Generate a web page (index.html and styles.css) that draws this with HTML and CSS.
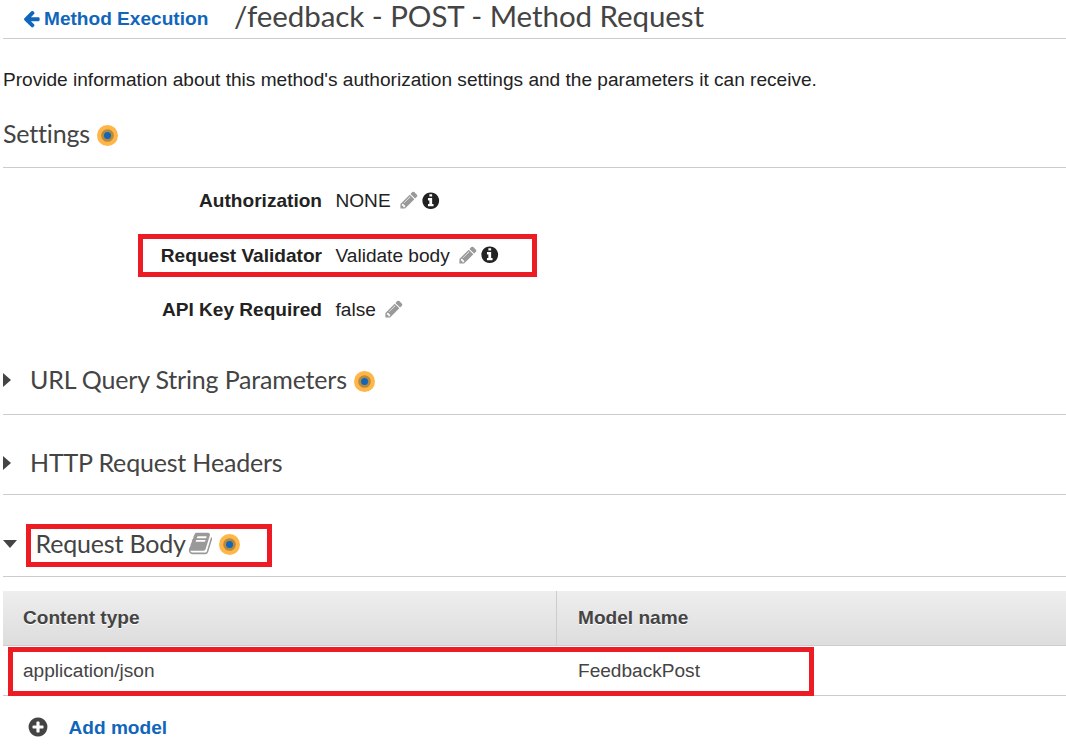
FILE: index.html
```html
<!DOCTYPE html>
<html lang="en">
<head>
<meta charset="utf-8">
<title>Method Request</title>
<link rel="stylesheet" href="styles.css">
</head>
<body>
<svg class="sprite" aria-hidden="true">
  <symbol id="arrow-left" viewBox="0 0 1792 1792"><path d="M1664 896v128q0 53-32.5 90.5t-84.5 37.5h-704l293 294q38 36 38 90t-38 90l-75 76q-37 37-90 37-52 0-91-37l-651-652q-37-37-37-90 0-52 37-91l651-650q38-38 91-38 52 0 90 38l75 74q38 38 38 91t-38 91l-293 293h704q52 0 84.5 37.5t32.5 90.5z"/></symbol>
  <symbol id="pencil" viewBox="0 0 1792 1792"><path d="M491 1536l91-91-235-235-91 91v107h128v128h107zm523-928q0-22-22-22-10 0-17 7l-542 542q-7 7-7 17 0 22 22 22 10 0 17-7l542-542q7-7 7-17zm-54-192l416 416-832 832h-416v-416zm683 96q0 53-37 90l-166 166-416-416 166-165q36-38 90-38 53 0 91 38l235 234q37 39 37 91z"/></symbol>
  <symbol id="info" viewBox="0 0 1792 1792"><path d="M1152 1376v-160q0-14-9-23t-23-9h-96v-512q0-14-9-23t-23-9h-320q-14 0-23 9t-9 23v160q0 14 9 23t23 9h96v320h-96q-14 0-23 9t-9 23v160q0 14 9 23t23 9h448q14 0 23-9t9-23zm-128-896v-160q0-14-9-23t-23-9h-192q-14 0-23 9t-9 23v160q0 14 9 23t23 9h192q14 0 23-9t9-23zm640 416q0 209-103 385.5t-279.5 279.5-385.5 103-385.5-103-279.5-279.5-103-385.5 103-385.5 279.5-279.5 385.5-103 385.5 103 279.5 279.5 103 385.5z"/></symbol>
  <symbol id="plus" viewBox="0 0 1792 1792"><path d="M1344 960v-128q0-26-19-45t-45-19h-256v-256q0-26-19-45t-45-19h-128q-26 0-45 19t-19 45v256h-256q-26 0-45 19t-19 45v128q0 26 19 45t45 19h256v256q0 26 19 45t45 19h128q26 0 45-19t19-45v-256h256q26 0 45-19t19-45zm320-64q0 209-103 385.5t-279.5 279.5-385.5 103-385.5-103-279.5-279.5-103-385.5 103-385.5 279.5-279.5 385.5-103 385.5 103 279.5 279.5 103 385.5z"/></symbol>
  <symbol id="book" viewBox="0 0 1792 1792"><path d="M1703 478q40 57 18 129l-275 906q-19 64-76.5 107.5t-122.5 43.5h-923q-77 0-148.5-53.5t-99.5-131.5q-24-67-2-127 0-4 3-27t4-37q1-8-3-21.5t-3-19.5q2-11 8-21t16.5-23.5 16.5-23.5q23-38 45-91.5t30-91.5q3-10 .5-30t-.5-28q3-11 17-28t17-23q21-36 42-92t25-90q1-9-2.5-32t.5-28q4-13 22-30.5t22-22.5q19-26 42.5-84.5t27.5-96.5q1-8-3-25.5t-2-26.5q2-8 9-18t18-23 17-21q8-12 16.5-30.5t15-35 16-36 19.5-32 26.5-23.5 36-11.5 47.5 5.5l-1 3q38-9 51-9h761q74 0 114 56t18 130l-274 906q-36 119-71.5 153.5t-128.5 34.5h-869q-27 0-38 15-11 16-1 43 24 70 144 70h923q29 0 56-15.5t35-41.5l300-987q7-22 5-57 38 15 59 43zm-1064 2q-4 13 2 22.5t20 9.5h608q13 0 25.5-9.5t16.5-22.5l21-64q4-13-2-22.5t-20-9.5h-608q-13 0-25.5 9.5t-16.5 22.5zm-83 256q-4 13 2 22.5t20 9.5h608q13 0 25.5-9.5t16.5-22.5l21-64q4-13-2-22.5t-20-9.5h-608q-13 0-25.5 9.5t-16.5 22.5z"/></symbol>
  <symbol id="target" viewBox="0 0 21 21"><circle cx="10.5" cy="10.5" r="10.5" fill="#ffb547"/><circle cx="10.5" cy="10.5" r="6.3" fill="#b58a3c"/><circle cx="10.5" cy="10.5" r="3.5" fill="#1166bb"/></symbol>
</svg>
<main class="page">
  <header class="topbar">
    <a class="back"><svg class="icon-back"><use href="#arrow-left"/></svg>Method Execution</a>
    <h1 class="title">/feedback - POST - Method Request</h1>
  </header>
  <p class="intro">Provide information about this method's authorization settings and the parameters it can receive.</p>
  <h2 class="section section-settings">Settings<svg class="target"><use href="#target"/></svg></h2>
  <dl class="settings">
    <div class="setting"><dt>Authorization</dt><dd>NONE<svg class="pencil"><use href="#pencil"/></svg><svg class="info"><use href="#info"/></svg></dd></div>
    <div class="setting"><dt>Request Validator</dt><dd>Validate body<svg class="pencil"><use href="#pencil"/></svg><svg class="info"><use href="#info"/></svg></dd><span class="mark mark-validator"></span></div>
    <div class="setting"><dt>API Key Required</dt><dd>false<svg class="pencil"><use href="#pencil"/></svg></dd></div>
  </dl>
  <h2 class="section section-query"><svg class="caret" viewBox="0 0 8 14"><path d="M0 0L8 7L0 14z"/></svg>URL Query String Parameters<svg class="target"><use href="#target"/></svg></h2>
  <h2 class="section section-headers"><svg class="caret" viewBox="0 0 8 14"><path d="M0 0L8 7L0 14z"/></svg>HTTP Request Headers</h2>
  <h2 class="section section-body"><svg class="caret-down" viewBox="0 0 14 8"><path d="M0 0H14L7 8z"/></svg>Request Body<svg class="book"><use href="#book"/></svg><svg class="target"><use href="#target"/></svg><span class="mark mark-body"></span></h2>
  <div class="table">
    <div class="row head"><div class="cell">Content type</div><div class="cell">Model name</div></div>
    <div class="row"><div class="cell">application/json</div><div class="cell">FeedbackPost</div><span class="mark mark-row"></span></div>
  </div>
  <a class="add"><svg class="plus"><use href="#plus"/></svg>Add model</a>
</main>
</body>
</html>
```
FILE: styles.css
```css
* { box-sizing: border-box; }
body {
  margin: 0;
  height: 745px;
  overflow: hidden;
  background: #fff;
  color: #222;
  font: 19.08px/24px "Liberation Sans", Arial, sans-serif;
}
svg { fill: currentColor; flex: none; }
.sprite { position: absolute; width: 0; height: 0; }
.page { padding-left: 3px; }
.topbar {
  display: flex;
  height: 39px;
  padding-left: 19px;
  border-bottom: 1px solid #ccc;
}
.back {
  display: flex;
  width: 212px;
  padding-top: 6px;
  color: #1166bb;
  font-weight: bold;
  line-height: 25px;
}
.icon-back { width: 19px; height: 19px; margin: 3px 3px 0 0; }
.title {
  margin: 0;
  color: #444;
  font: 29.5px/32px Lato, sans-serif;
  letter-spacing: -0.06px;
  white-space: nowrap;
}
.intro { margin: 0; padding-top: 29px; height: 77px; white-space: nowrap; }
.section {
  position: relative;
  display: flex;
  align-items: center;
  margin: 0;
  border-bottom: 1px solid #ccc;
  color: #444;
  font: 25px/32px Lato, sans-serif;
  letter-spacing: -0.18px;
  white-space: nowrap;
}
.section-settings { height: 52px; padding-bottom: 17px; }
.target { width: 21px; height: 21px; margin: 4px 0 0 7px; }
.settings { margin: 0; padding-top: 6px; height: 191px; }
.setting { position: relative; display: flex; align-items: center; height: 54.5px; }
.setting dt { width: 319px; text-align: right; font-weight: bold; }
.setting dd { display: flex; align-items: center; margin: 0 0 0 13.5px; }
.pencil { width: 20px; height: 20px; margin: -2px 0 0 8px; color: #999; }
.info { width: 19.5px; height: 19.5px; margin: -2px 0 0 2.5px; }
.caret { width: 8px; height: 14px; margin: 2px 19px 0 0; }
.caret-down { width: 14px; height: 8px; margin: 2px 18.5px 0 0; }
.section-query { height: 56px; padding-bottom: 15px; }
.section-headers { height: 80px; padding-top: 15px; }
.section-body { height: 82px; padding-top: 14px; }
.section-query .target { margin-left: 7.5px; }
.book { width: 25px; height: 25px; margin: 1px 0 0 2.5px; color: #999; }
.section-body .target { margin-left: 5.5px; }
.table { margin-top: 14px; color: #444; }
.row {
  position: relative;
  display: grid;
  grid-template-columns: 554px 1fr;
  height: 50px;
  border-bottom: 1px solid #ccc;
}
.cell { display: flex; align-items: center; padding-left: 20px; }
.head {
  height: 55px;
  background: linear-gradient(#eee, #ddd);
  font-weight: bold;
  text-shadow: 0 1px 0 #fff;
}
.head .cell:first-child { border-right: 1px solid #ccc; }
.cell + .cell { padding-left: 21px; }
.add {
  display: flex;
  align-items: center;
  height: 24px;
  margin: 20px 0 0 24px;
  color: #1166bb;
  font-weight: bold;
}
.plus { width: 22px; height: 22px; margin: -2px 19.5px 0 0; color: #444; }
/* Red highlight frames drawn over the rows they call out. */
.mark { position: absolute; border: 5px solid #ed1c24; }
.mark-validator { left: 135px; top: 5px; width: 399px; height: 43px; }
.mark-body { left: 23px; top: 29px; width: 246px; height: 43px; }
.mark-row { left: 5px; top: 1px; width: 806px; height: 49px; }
```
